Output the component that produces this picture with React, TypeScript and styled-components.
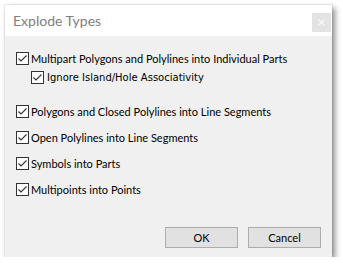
import React from 'react';
import styled, { createGlobalStyle } from 'styled-components';

const GlobalStyle = createGlobalStyle`
  html, body {
    margin: 0;
    padding: 0;
    background: #ffffff;
  }
  body {
    font-family: Lato, 'Open Sans', sans-serif;
  }
`;

const Page = styled.div`
  padding: 5px 0 0 5px;
`;

const Dialog = styled.div`
  width: 327px;
  height: 252px;
  display: flex;
  flex-direction: column;
  background: #f0f0f0;
  box-shadow: 0 0 0 1px rgba(0, 0, 0, 0.06), 3px 3px 6px rgba(0, 0, 0, 0.45);
`;

const TitleBar = styled.div`
  height: 31px;
  flex: none;
  display: flex;
  align-items: center;
  justify-content: space-between;
  background: #ffffff;
  padding: 0 1px 0 8px;
`;

const Title = styled.span`
  font-family: Lato, sans-serif;
  font-size: 14px;
  color: #808080;
`;

const CloseButton = styled.div`
  width: 19px;
  height: 19px;
  margin-top: 3px;
  display: flex;
  align-items: center;
  justify-content: center;
  background: #e3e3e3;
`;

const Body = styled.div`
  flex: 1;
  display: flex;
  flex-direction: column;
  padding: 16px 11px 9px 11px;
`;

const Options = styled.div`
  flex: 1;
  display: flex;
  flex-direction: column;
`;

const Row = styled.label<{ $indent?: number; $top?: number; $compact?: boolean }>`
  display: flex;
  align-items: center;
  height: 13px;
  margin-left: ${(p) => p.$indent ?? 0}px;
  margin-top: ${(p) => p.$top ?? 0}px;
  gap: ${(p) => (p.$compact ? 3 : 2)}px;
  font-family: ${(p) => (p.$compact ? "'DejaVu Sans', sans-serif" : 'Lato, sans-serif')};
  font-size: ${(p) => (p.$compact ? '10px' : '11px')};
  color: #000000;
  white-space: nowrap;
`;

const Box = styled.span`
  width: 13px;
  height: 13px;
  flex: none;
  box-sizing: border-box;
  border: 1px solid #333333;
  background: #ffffff;
  display: flex;
  align-items: center;
  justify-content: center;
`;

const Buttons = styled.div`
  display: flex;
  justify-content: flex-end;
  gap: 10px;
`;

const Button = styled.button`
  width: 73px;
  height: 21px;
  padding: 0;
  box-sizing: border-box;
  background: #e1e1e1;
  border: 1px solid #adadad;
  font-family: Lato, sans-serif;
  font-size: 11px;
  color: #000000;
`;

const Check = () => (
  <Box>
    <svg width="11" height="11" viewBox="0 0 11 11">
      <path d="M1.5 5.5 L4 8 L9.5 2.5" fill="none" stroke="#333" strokeWidth="1.1" />
    </svg>
  </Box>
);

const options = [
  { label: 'Multipart Polygons and Polylines into Individual Parts', top: 0 },
  { label: 'Ignore Island/Hole Associativity', top: 6, indent: 15, compact: true },
  { label: 'Polygons and Closed Polylines into Line Segments', top: 21 },
  { label: 'Open Polylines into Line Segments', top: 13 },
  { label: 'Symbols into Parts', top: 13 },
  { label: 'Multipoints into Points', top: 13 },
];

const App: React.FC = () => (
  <Page>
    <GlobalStyle />
    <Dialog>
      <TitleBar>
        <Title>Explode Types</Title>
        <CloseButton>
          <svg width="7" height="7" viewBox="0 0 7 7">
            <path d="M0.5 0.5 L6.5 6.5 M6.5 0.5 L0.5 6.5" stroke="#f7f7f7" strokeWidth="1.2" />
          </svg>
        </CloseButton>
      </TitleBar>
      <Body>
        <Options>
          {options.map((o) => (
            <Row key={o.label} $top={o.top} $indent={o.indent} $compact={o.compact}>
              <Check />
              {o.label}
            </Row>
          ))}
        </Options>
        <Buttons>
          <Button>OK</Button>
          <Button>Cancel</Button>
        </Buttons>
      </Body>
    </Dialog>
  </Page>
);

export default App;
